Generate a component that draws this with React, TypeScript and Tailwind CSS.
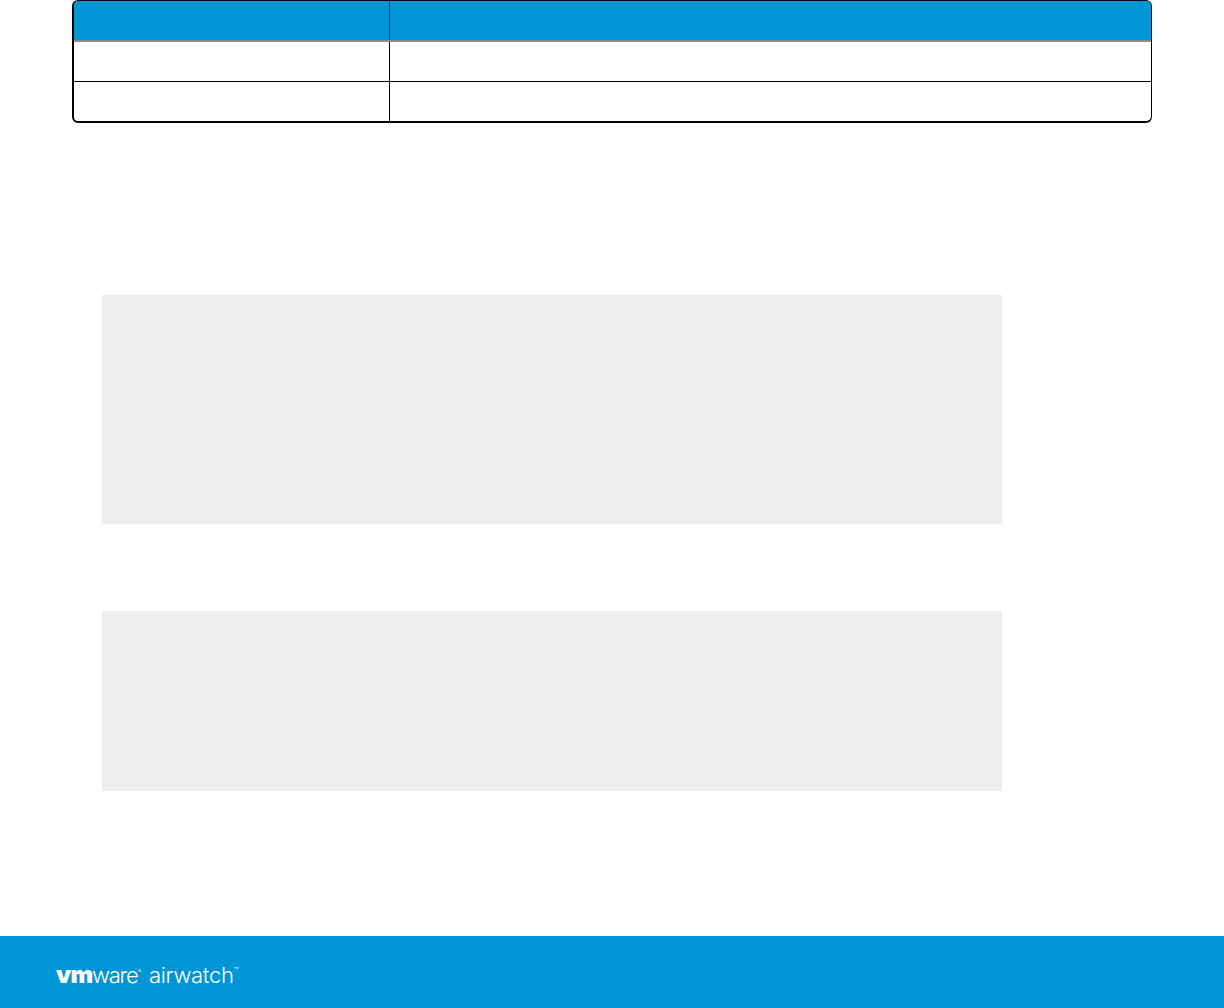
export default function App() {
  return (
    <div className="h-[1008px] w-[1224px] overflow-hidden bg-white flex flex-col font-['Liberation_Sans',sans-serif]">
      <div className="ml-[72px] w-[1080px] h-[123px] shrink-0 rounded-[6px] border-t border-r border-l-2 border-b-2 border-black overflow-hidden flex flex-col">
        <div className="h-[39px] shrink-0 flex bg-[#0096d6] border-b-2 border-[#8c8c8c] box-content">
          <div className="w-[316px] border-r border-[#10324a]" />
          <div className="flex-1" />
        </div>
        <div className="h-[40px] shrink-0 flex border-b border-black">
          <div className="w-[316px] border-r border-black" />
          <div className="flex-1" />
        </div>
        <div className="flex-1 flex">
          <div className="w-[316px] border-r border-black" />
          <div className="flex-1" />
        </div>
      </div>
      <div className="ml-[102px] mt-[172px] w-[900px] h-[229px] shrink-0 bg-[#eeeeee]" />
      <div className="ml-[102px] mt-[87px] w-[900px] h-[180px] shrink-0 bg-[#eeeeee]" />
      <div className="mt-auto h-[72px] shrink-0 bg-[#0096d6] flex items-center pl-[56px] pt-[6px] text-white">
        <span className="flex items-baseline leading-none font-['Inter',sans-serif]">
          <span className="text-[24px] font-black tracking-[-0.6px] w-[36px]">vm</span>
          <span className="text-[22px] font-light tracking-[-1.2px] w-[46px]">ware</span>
          <span className="text-[5px] self-start mt-[6px] w-[4px]">®</span>
          <span className="ml-[7px] text-[22px] font-light tracking-[-0.3px] w-[85px]">airwatch</span>
          <span className="text-[7px] self-start mt-[4px]">™</span>
        </span>
      </div>
    </div>
  );
}
